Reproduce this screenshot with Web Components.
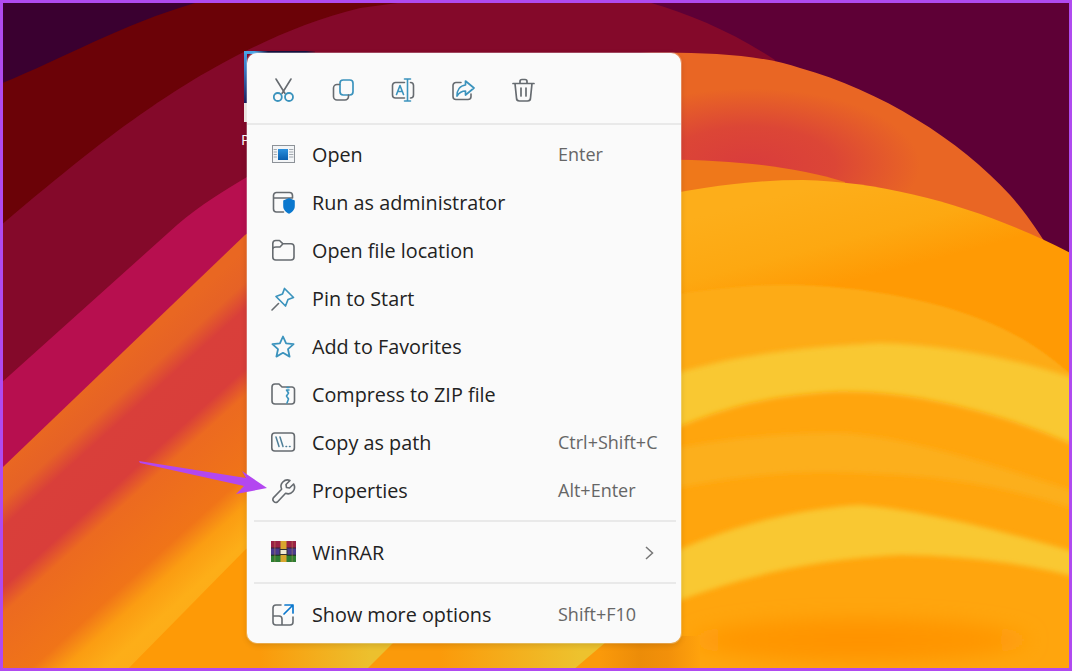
<!DOCTYPE html>
<html lang="en">
<head>
<meta charset="utf-8">
<title>Context menu</title>
<style>
html,body{margin:0;padding:0;width:1072px;height:671px;overflow:hidden;background:#5e0036}
</style>
</head>
<body>
<x-desktop>
  <x-wallpaper slot="back"></x-wallpaper>
  <x-desktop-file slot="back"></x-desktop-file>
  <x-menu>
    <x-toolbar slot="tools">
      <x-icon name="cut"></x-icon>
      <x-icon name="copy"></x-icon>
      <x-icon name="rename"></x-icon>
      <x-icon name="share"></x-icon>
      <x-icon name="trash"></x-icon>
    </x-toolbar>
    <x-item icon="open" shortcut="Enter">Open</x-item>
    <x-item icon="admin">Run as administrator</x-item>
    <x-item icon="folder">Open file location</x-item>
    <x-item icon="pin">Pin to Start</x-item>
    <x-item icon="star">Add to Favorites</x-item>
    <x-item icon="zip">Compress to ZIP file</x-item>
    <x-item icon="path" shortcut="Ctrl+Shift+C">Copy as path</x-item>
    <x-item icon="wrench" shortcut="Alt+Enter">Properties</x-item>
    <x-sep></x-sep>
    <x-item icon="winrar" submenu>WinRAR</x-item>
    <x-sep></x-sep>
    <x-item icon="more" shortcut="Shift+F10">Show more options</x-item>
  </x-menu>
  <x-arrow slot="over"></x-arrow>
</x-desktop>

<script>
const G='#666b70', B='#3b93bd', S='#0b78ce';
const st=(d,c=G,w=1.6)=>`<path d="${d}" fill="none" stroke="${c}" stroke-width="${w}" stroke-linecap="round" stroke-linejoin="round"/>`;
const ICONS={
 cut: st('M5 1 L14 15.5 M20 1 L11 15.5',G,1.6)+`<circle cx="6.8" cy="19" r="4" fill="none" stroke="${B}" stroke-width="1.8"/><circle cx="18" cy="19" r="4" fill="none" stroke="${B}" stroke-width="1.8"/>`,
 copy: `<rect x="9" y="2" width="13" height="15" rx="3.2" fill="none" stroke="${B}" stroke-width="1.7"/>`+st('M8.5 6.5 H6 a3.5 3.5 0 0 0 -3.5 3.5 V18.5 a3.5 3.5 0 0 0 3.5 3.5 H14 a3.5 3.5 0 0 0 3.5 -3.5 V17'),
 rename: st('M13.5 4.5 H4.5 a3 3 0 0 0 -3 3 V17 a3 3 0 0 0 3 3 H13.5 M19.5 4.5 a3 3 0 0 1 3 3 V17 a3 3 0 0 1 -3 3')+st('M16.5 1 V23 M13.5 1 H19.5 M13.5 23 H19.5 M5.5 16.5 L9 7.5 L12.5 16.5 M6.8 13.5 H11.2',B,1.6),
 share: st('M10 4.5 H5 a3 3 0 0 0 -3 3 V18.5 a3 3 0 0 0 3 3 H17 a3 3 0 0 0 3 -3 V16')+st('M14.5 3 L23 10 L14.5 17 V13 C10.5 13 8 15 6 18 C6 12 9 7.5 14.5 7 Z',B,1.7),
 trash: st('M9 5 V3.5 A2 2 0 0 1 11 1.5 H14 A2 2 0 0 1 16 3.5 V5 M2 5.5 H23 M4 5.5 L5.5 20 A3 3 0 0 0 8.5 23 H16.5 A3 3 0 0 0 19.5 20 L21 5.5 M10 10 V18 M15 10 V18',G,1.7),
 open: `<defs><linearGradient id="o" x1="0" y1="0" x2="0" y2="1"><stop offset="0" stop-color="#2a90de"/><stop offset="1" stop-color="#0a5fae"/></linearGradient></defs><rect x="1.5" y="2.5" width="22" height="17" fill="#f3f5f7" stroke="#8d9298" stroke-width="1"/><rect x="7" y="6" width="10" height="11" fill="url(#o)"/>`+st('M3 6.5 H5.5 M3 9 H5.5 M3 11.5 H5.5 M3 14 H5.5 M18.5 6.5 H22 M18.5 9 H22 M18.5 11.5 H22 M18.5 14 H22','#9aa0a6',.9),
 admin: st('M12.5 21 H5.5 a3 3 0 0 1 -3 -3 V4.5 a3 3 0 0 1 3 -3 H18.5 a3 3 0 0 1 3 3 V7 M2.5 7 H21.5')+`<path d="M18 7 L23.8 9.6 V15 C23.8 19 21 21.2 18 22.8 C15 21.2 12.2 19 12.2 15 V9.6 Z" fill="${S}"/>`,
 folder: st('M1.8 18 V4.5 a3 3 0 0 1 3 -3 H8.5 L12 4.8 H20 a3 3 0 0 1 3 3 V18 a3 3 0 0 1 -3 3 H4.8 a3 3 0 0 1 -3 -3 Z M1.8 10 C2 8.5 3 8 5 8 H9 L12 4.8'),
 pin: st('M1 23 L7.5 16.5')+st('M13.5 1.5 L22.5 10.5 L17 12.5 L14.5 19 L5 9.5 L11.5 7 Z',B,1.7),
 star: st('M12 1.5 L15.1 8.4 L22.6 9.2 L17 14.2 L18.6 21.6 L12 17.8 L5.4 21.6 L7 14.2 L1.4 9.2 L8.9 8.4 Z',B,1.8),
 zip: st('M1 18 V4 a3 3 0 0 1 3 -3 H8 L11 4 H21 a2.5 2.5 0 0 1 2.5 2.5 V18 a3 3 0 0 1 -3 3 H4 a3 3 0 0 1 -3 -3 Z')+st('M16 4.5 H18 M18 7 H15.5 L17.5 10 L15.5 13 L17.5 16 L16 20',B,1.6),
 path: `<rect x=".8" y="2" width="22.6" height="18" rx="3" fill="none" stroke="${G}" stroke-width="1.6"/>`+st('M5 6 L8 15.5 M9 6 L12 15.5 M15 15.5 H15.6 M18.5 15.5 H19.1','#4f7f98',1.5),
 wrench: st('M22.6 5 L18.5 9 L15.5 8.5 L15 5.5 L19 1.5 A6.5 6.5 0 0 0 10.6 10.2 L2.3 18.9 A3 3 0 0 0 6.4 23 L14.6 14.3 A6.5 6.5 0 0 0 22.6 5 Z'),
 winrar: `<rect x="0" y="0" width="25" height="7" fill="#9a2244"/><rect x="0" y="7" width="25" height="7" fill="#4a3a8c"/><rect x="0" y="14" width="25" height="7" fill="#2e7d32"/><rect x="0" y="6.5" width="25" height="1" fill="#3a2030"/><rect x="0" y="13.7" width="25" height="1" fill="#20301f"/><rect x="9.5" y="0" width="6" height="21" fill="#d9a62e"/><rect x="9" y="8.5" width="7" height="5" fill="#efe9d2" stroke="#333" stroke-width="1"/><rect x="3" y="0" width="1.6" height="21" fill="#c99b5a" opacity=".3"/><rect x="20.5" y="0" width="1.6" height="21" fill="#c99b5a" opacity=".3"/>`,
 more: st('M10 2 H5 a3 3 0 0 0 -3 3 V19 a3 3 0 0 0 3 3 H19 a3 3 0 0 0 3 -3 V14 M2 13 H8 a3 3 0 0 1 3 3 V22')+st('M14 2 H22 V10 M22 2 L13 11',S,1.7)
};
const def=(name,html)=>customElements.define(name,class extends HTMLElement{
  constructor(){super();this.attachShadow({mode:'open'}).innerHTML=html;}
});

customElements.define('x-icon',class extends HTMLElement{
  connectedCallback(){
    if(this.shadowRoot)return;
    this.attachShadow({mode:'open'}).innerHTML=`<style>:host{display:block;width:25px;height:24px}svg{display:block;overflow:visible}</style><svg width="25" height="24" viewBox="0 0 25 24" aria-hidden="true">${ICONS[this.getAttribute('name')]||''}</svg>`;
  }
});

def('x-desktop',`<style>
:host{display:block;position:relative;box-sizing:border-box;width:1072px;height:671px;border:3px solid #b04af0;overflow:hidden;padding:50px 0 0 244px;font-family:"Open Sans","Noto Sans",sans-serif}
</style><slot name="back"></slot><slot></slot><slot name="over"></slot>`);

def('x-wallpaper',`<style>:host{position:absolute;inset:0;display:block}svg{display:block}</style>
<svg width="1066" height="665" viewBox="3 3 1066 665" aria-hidden="true">
<defs>
<filter id="b1" x="-10%" y="-10%" width="120%" height="120%"><feGaussianBlur stdDeviation="1"/></filter>
<filter id="b2" x="-10%" y="-10%" width="120%" height="120%"><feGaussianBlur stdDeviation="2.5"/></filter>
<filter id="b9" x="-40%" y="-150%" width="180%" height="400%"><feGaussianBlur stdDeviation="9"/></filter>
<linearGradient id="left" gradientUnits="userSpaceOnUse" x1="3" y1="467" x2="168.6" y2="651">
<stop offset="0" stop-color="#e96722"/><stop offset=".10" stop-color="#e66226"/><stop offset=".18" stop-color="#d93f3a"/><stop offset=".36" stop-color="#d93e3a"/><stop offset=".44" stop-color="#ec6a20"/><stop offset=".68" stop-color="#f07418"/><stop offset=".77" stop-color="#fb9d12"/><stop offset=".88" stop-color="#fdae18"/><stop offset="1" stop-color="#fcab18"/>
</linearGradient>
<radialGradient id="red" gradientUnits="userSpaceOnUse" cx="750" cy="165" r="170" gradientTransform="translate(750 165) scale(1 .45) translate(-750 -165)">
<stop offset="0" stop-color="#d93c3c"/><stop offset=".5" stop-color="#dc4636"/><stop offset="1" stop-color="#e96624"/>
</radialGradient>
<linearGradient id="amber" gradientUnits="userSpaceOnUse" x1="820" y1="185" x2="850" y2="300">
<stop offset="0" stop-color="#fdae1a"/><stop offset=".5" stop-color="#fda811"/><stop offset=".85" stop-color="#ff9a04"/><stop offset="1" stop-color="#ff9a04"/>
</linearGradient>
<radialGradient id="low" gradientUnits="userSpaceOnUse" cx="860" cy="640" r="190" gradientTransform="translate(860 640) scale(1 .2) translate(-860 -640)">
<stop offset="0" stop-color="#ff9200"/><stop offset=".7" stop-color="#ff9705"/><stop offset="1" stop-color="#ffa30e"/>
</radialGradient>
<linearGradient id="foot" gradientUnits="userSpaceOnUse" x1="240" y1="0" x2="700" y2="0">
<stop offset="0" stop-color="#fb9a0a"/><stop offset=".78" stop-color="#fb9a0a"/><stop offset=".87" stop-color="#ec8c08"/><stop offset=".93" stop-color="#f2900a"/><stop offset="1" stop-color="#ffa20c"/>
</linearGradient>
<linearGradient id="y1" gradientUnits="userSpaceOnUse" x1="260" y1="0" x2="370" y2="0">
<stop offset="0" stop-color="#fb9a0a"/><stop offset="1" stop-color="#ecc02e"/>
</linearGradient>
<linearGradient id="y2" gradientUnits="userSpaceOnUse" x1="440" y1="0" x2="580" y2="0">
<stop offset="0" stop-color="#fb9a0a"/><stop offset="1" stop-color="#edc22e"/>
</linearGradient>
</defs>
<rect x="0" y="0" width="1072" height="671" fill="#5e0036"/>
<rect x="0" y="0" width="420" height="240" fill="#3a0030"/>
<path d="M0 84 C60 60 120 25 195 3 L215 0 L640 0 L700 100 L0 300 Z" fill="#6b0207"/>
<path d="M0 226 C60 175 110 135 147 110 C190 80 270 30 360 8 L420 0 L640 0 C680 10 730 30 775 60 L775 640 L0 640 Z" fill="#84092a"/>
<path d="M0 384 L177 225 C200 205 225 190 247 177 L300 140 L300 700 L0 700 Z" fill="#b70f4f"/>
<path d="M0 470 L245 235 L300 200 L300 700 L0 700 Z" fill="url(#left)"/>
<path d="M122 675 L245 550 L300 500 V700 H122 Z" fill="#fe9a06"/>
<path d="M640 53 C700 52 760 54 800 68 C880 90 960 140 1010 195 C1030 218 1040 235 1050 250 L1080 640 L640 640 Z" fill="url(#red)"/>
<path d="M640 160 C720 158 790 165 845 182 L845 300 L640 300 Z" fill="#ef781a"/>
<path d="M640 200 C700 187 750 180 803 180 C900 182 1000 215 1080 258 L1080 700 L640 700 Z" fill="url(#amber)"/>
<path d="M640 300 C700 290 760 283 800 285 C880 288 960 305 1015 335 C1040 348 1060 365 1080 382 L1080 700 L640 700 Z" fill="#fdab17" filter="url(#b1)"/>
<path d="M640 385 C700 365 750 350 880 343 C950 345 1020 360 1080 380 L1080 700 L640 700 Z" fill="#f9c830" filter="url(#b2)"/>
<path d="M640 445 C700 415 750 397 830 392 C900 388 1000 410 1085 450 L1085 700 L640 700 Z" fill="#ffa50f" filter="url(#b2)"/>
<path d="M640 456 C700 442 760 433 840 433 C900 436 980 460 1085 495 L1085 512 C1020 490 950 476 880 474 C800 468 740 475 640 495 Z" fill="#fcaf1b" filter="url(#b2)"/>
<path d="M640 570 C700 535 780 510 860 505 C920 510 1000 530 1085 555 L1085 580 C1040 565 960 555 900 555 C800 560 730 580 640 615 Z" fill="#f9c830" filter="url(#b2)"/>
<ellipse cx="860" cy="640" rx="170" ry="22" fill="url(#low)" filter="url(#b9)"/>
<rect x="240" y="636" width="460" height="40" fill="url(#foot)"/>
<path d="M250 636 L400 636 L360 676 L250 676 Z" fill="url(#y1)"/>
<path d="M420 636 L613 636 L566 676 L420 676 Z" fill="url(#y2)"/>
</svg>`);

def('x-desktop-file',`<style>
:host{position:absolute;left:241px;top:48px;width:71px;height:100px;display:block;color:#fff;font:15px "Open Sans",sans-serif}
.thumb{height:52px;width:3px;background:linear-gradient(180deg,#4aa5e8 0,#3d7fcc 35%,#1c1f60 100%);position:relative}
.top{position:absolute;left:0;top:0;width:71px;height:3px;background:linear-gradient(90deg,#4aa5e8 0,#4aa5e8 10px,#16123f 24px,#16123f 62px,#6b0c2a 100%)}
.label{height:19px;background:#f3ece8;width:3px}
.p{position:absolute;left:-3px;top:78px;line-height:20px}
</style><div class="thumb"></div><div class="top"></div><div class="label"></div><span class="p">P</span>`);

def('x-menu',`<style>
:host{display:block;box-sizing:border-box;width:434px;height:590px;background:#fafafa;border-radius:10px;box-shadow:0 0 0 1px rgba(255,255,255,.25),0 2px 6px rgba(0,0,0,.14);overflow:hidden;color:#222;position:relative}
.list{padding:6px 0 4px;display:flex;flex-direction:column}
hr{margin:0;border:0;height:2px;background:#e9e9e9}
</style><slot name="tools"></slot><hr><div class="list"><slot></slot></div>`);

def('x-toolbar',`<style>
:host{display:flex;height:70px;box-sizing:border-box;padding:0 0 0 24px;align-items:center;gap:35px}
::slotted(x-icon){position:relative;top:2px}
</style><slot></slot>`);

def('x-sep',`<style>:host{display:block;height:2px;margin:5px 5px 7px 7px;background:#e9e9e9}</style>`);

customElements.define('x-item',class extends HTMLElement{
  connectedCallback(){
    if(this.shadowRoot)return;
    const sc=this.getAttribute('shortcut'), sub=this.hasAttribute('submenu');
    this.attachShadow({mode:'open'}).innerHTML=`<style>
:host{display:grid;grid-template-columns:25px 230px 1fr;column-gap:16px;align-items:center;height:48px;box-sizing:border-box;padding-left:24px;font-size:19.8px;color:#222}
.label{white-space:nowrap;padding-bottom:2px}
.sc{font-size:18px;color:#666;white-space:nowrap;padding-bottom:2px}
.chev{display:block;margin-left:87px}
</style><x-icon name="${this.getAttribute('icon')}"></x-icon><span class="label"><slot></slot></span>${sc?`<span class="sc">${sc}</span>`:''}${sub?`<svg class="chev" width="9" height="14" viewBox="0 0 9 14" aria-hidden="true"><path d="M1 1 L7.5 7 L1 13" fill="none" stroke="#777" stroke-width="1.5"/></svg>`:''}`;
  }
});

def('x-arrow',`<style>:host{position:absolute;left:130px;top:450px;display:block;width:145px;height:50px;pointer-events:none}svg{display:block}</style>
<svg width="145" height="50" viewBox="133 453 145 50" aria-hidden="true"><path d="M139 461 L140 463 L244 486 L236 494 L267 488 L242 471 L246 478 Z" fill="#b347f0"/></svg>`);
</script>
</body>
</html>
